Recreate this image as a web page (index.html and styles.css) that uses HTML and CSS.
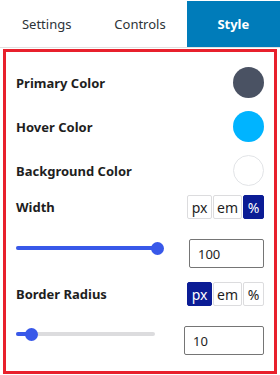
FILE: index.html
```html
<!DOCTYPE html>
<html lang="en">
<head>
    <meta charset="UTF-8">
    <meta name="viewport" content="width=device-width, initial-scale=1.0">
    <title>Style</title>
    <link rel="stylesheet" href="styles.css">
</head>
<body>
    <div class="tabs">
        <a class="tab">Settings</a>
        <a class="tab">Controls</a>
        <a class="tab active">Style</a>
    </div>
    <div class="panel">
        <div class="row color-row">
            <span class="label">Primary Color</span>
            <span class="swatch" style="background:#4a5263"></span>
        </div>
        <div class="row color-row">
            <span class="label">Hover Color</span>
            <span class="swatch" style="background:#00b4ff"></span>
        </div>
        <div class="row color-row">
            <span class="label">Background Color</span>
            <span class="swatch swatch-white"></span>
        </div>

        <div class="row unit-row">
            <span class="label">Width</span>
            <div class="units">
                <a class="unit u-px">px</a>
                <a class="unit u-em">em</a>
                <a class="unit u-pc active">%</a>
            </div>
        </div>
        <div class="row slider-row">
            <div class="slider slider-width">
                <div class="fill" style="width:100%"></div>
                <div class="thumb" style="left:100%"></div>
            </div>
            <input class="num num-width" type="text" value="100">
        </div>

        <div class="row unit-row unit-row-2">
            <span class="label">Border Radius</span>
            <div class="units">
                <a class="unit u-px active">px</a>
                <a class="unit u-em">em</a>
                <a class="unit u-pc">%</a>
            </div>
        </div>
        <div class="row slider-row">
            <div class="slider slider-radius">
                <div class="fill" style="width:11%"></div>
                <div class="thumb" style="left:11%"></div>
            </div>
            <input class="num num-radius" type="text" value="10">
        </div>
    </div>
</body>
</html>
```

FILE: styles.css
```css
body {
    margin: 0;
    padding: 0;
    background: #fff;
    font-family: "Noto Sans", "Open Sans", sans-serif;
    color: #1e1e1e;
    overflow: hidden;
}
.tabs {
    display: flex;
    margin-top: 1px;
    height: 46px;
    border-bottom: 1px solid #e0e0e0;
}
.tab {
    flex: 1;
    display: flex;
    align-items: center;
    justify-content: center;
    font-size: 13px;
    color: #2c3338;
    cursor: pointer;
}
.tab.active {
    background: #007cba;
    color: #fff;
    font-weight: 700;
}
.panel {
    margin: 1px 3px 0;
    border: 3px solid #e8202c;
    padding: 15px 10px 0 10px;
    box-sizing: border-box;
    height: 325px;
}
.row {
    display: flex;
    align-items: center;
    justify-content: space-between;
}
.label {
    font-size: 13px;
    font-weight: 700;
    color: #1e1e1e;
}
.color-row {
    height: 31px;
    margin-bottom: 13px;
}
.swatch {
    width: 31px;
    height: 31px;
    border-radius: 50%;
    box-sizing: border-box;
}
.swatch-white {
    background: #fff;
    border: 1px solid #e2e4e7;
}
.unit-row {
    height: 24px;
    margin-top: -4px;
}
.unit-row-2 {
    margin-top: 14px;
}
.units {
    display: flex;
    gap: 1px;
}
.unit {
    height: 24px;
    box-sizing: border-box;
    border: 1px solid #dcdcde;
    border-radius: 2px;
    display: flex;
    align-items: center;
    justify-content: center;
    font-size: 14px;
    color: #1e1e1e;
    cursor: pointer;
}
.u-px { width: 25px; }
.u-em { width: 29px; }
.u-pc { width: 21px; }
.unit.active {
    background: #0b1c95;
    border-color: #0b1c95;
    color: #fff;
}
.slider-row {
    margin-top: 20px;
    height: 29px;
}
.slider {
    position: relative;
    height: 4px;
    border-radius: 2px;
    background: #dcdcde;
    margin-top: -11px;
}
.slider-width { width: 141px; }
.slider-radius { width: 139px; margin-top: -13px; }
.fill {
    height: 4px;
    border-radius: 2px;
    background: #3858e9;
}
.thumb {
    position: absolute;
    top: -4.5px;
    width: 13px;
    height: 13px;
    margin-left: -6.5px;
    border-radius: 50%;
    background: #3858e9;
}
.num {
    height: 29px;
    box-sizing: border-box;
    border: 1px solid #757575;
    border-radius: 2px;
    padding: 0 8px;
    font-family: "Noto Sans", "Open Sans", sans-serif;
    font-size: 13px;
    color: #1e1e1e;
    outline: none;
}
.num-width { width: 75px; }
.num-radius { width: 80px; }
```
